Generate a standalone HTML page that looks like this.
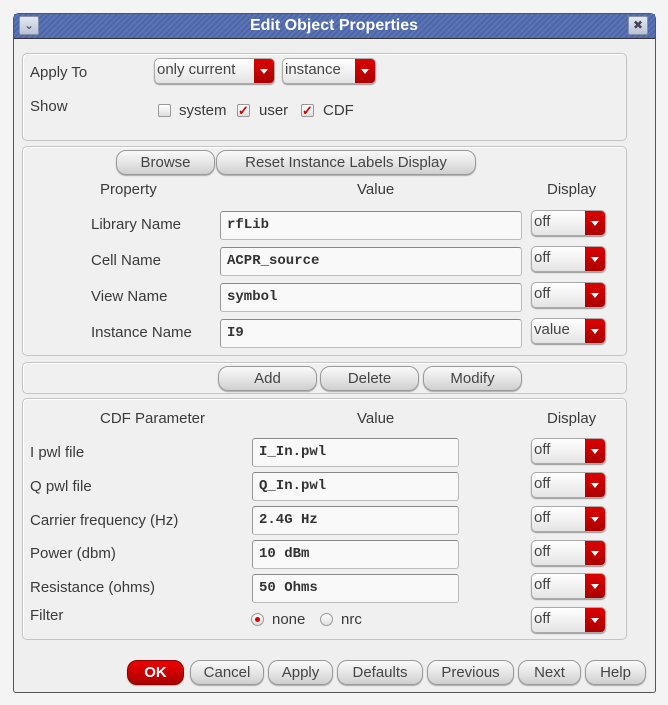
<!DOCTYPE html>
<html><head><meta charset="utf-8"><style>
*{box-sizing:border-box;margin:0;padding:0}
body{width:668px;height:705px;background:#f4f4f4;position:relative;overflow:hidden;font-family:"Liberation Sans",sans-serif;font-size:15px;color:#3a3a3a}
.a{position:absolute}
.win{left:13px;top:13px;width:643px;height:680px;border:1px solid #555;border-radius:6px 6px 3px 3px;background:#efefef}
.title{left:14px;top:14px;width:641px;height:25px;background:repeating-linear-gradient(135deg,#4d66a8 0 2px,#5a74b6 2px 4px);border-bottom:1px solid #333}
.tt{left:0;width:668px;top:17px;text-align:center;color:#fff;font-weight:bold;font-size:16px}
.tb{width:20px;height:19px;background:linear-gradient(#e4e8f0,#b9c2d6);border:1px solid #8890a8;border-radius:2px;text-align:center;font-size:12px;line-height:17px;color:#445}
.grp{border:1px solid #c4c4c4;border-radius:5px;background:#f0f0f0;box-shadow:inset 1px 1px 0 #fff}
.btn{height:25px;border:1px solid #999;border-radius:10px;background:linear-gradient(#fafafa,#e2e2e2 60%,#cfcfcf);text-align:center;line-height:23px;color:#444;box-shadow:0 1px 1px #aaa}
.dd{height:26px;border:1px solid #aaa;border-radius:5px;background:linear-gradient(#fff,#e4e4e4);color:#444;padding-left:2px;line-height:22px;box-shadow:0 1px 1px #999;overflow:hidden}
.dd i{position:absolute;right:0;top:0;width:20px;height:100%;background:linear-gradient(#d00,#a00)}
.dd i:after{content:"";position:absolute;left:6px;top:10px;border-left:4px solid transparent;border-right:4px solid transparent;border-top:5px solid #fff}
.fld{height:29px;border:1px solid #bbb;border-top-color:#888;border-left-color:#999;border-radius:3px;background:#f9f9f9;font-family:"Liberation Mono",monospace;font-weight:bold;font-size:14px;line-height:27px;padding-left:6px;color:#333}
.cb{width:13px;height:13px;border:1px solid #999;background:linear-gradient(#fff,#ddd);border-radius:2px;color:#c00;font-size:13px;line-height:11px;text-align:center;font-weight:bold}
.rd{width:13px;height:13px;border:1px solid #999;border-radius:50%;background:linear-gradient(#fff,#ddd)}
</style></head><body>
<div class="a win"></div>
<div class="a title"></div>
<div class="a tt">Edit Object Properties</div>
<div class="a tb" style="left:19px;top:16px">&#8964;</div>
<div class="a tb" style="left:628px;top:16px">&#10006;</div>

<div class="a grp" style="left:22px;top:53px;width:605px;height:88px"></div>
<div class="a" style="left:30px;top:64px">Apply To</div>
<div class="a" style="left:30px;top:98px">Show</div>
<div class="a dd" style="left:154px;top:58px;width:121px">only current<i></i></div>
<div class="a dd" style="left:282px;top:58px;width:94px">instance<i></i></div>
<div class="a cb" style="left:158px;top:104px"></div><div class="a" style="left:179px;top:102px">system</div>
<div class="a cb" style="left:237px;top:104px">&#10003;</div><div class="a" style="left:259px;top:102px">user</div>
<div class="a cb" style="left:301px;top:104px">&#10003;</div><div class="a" style="left:323px;top:102px">CDF</div>

<div class="a grp" style="left:22px;top:146px;width:605px;height:210px"></div>
<div class="a btn" style="left:116px;top:150px;width:99px">Browse</div>
<div class="a btn" style="left:216px;top:150px;width:260px">Reset Instance Labels Display</div>
<div class="a" style="left:100px;top:181px">Property</div>
<div class="a" style="left:357px;top:181px">Value</div>
<div class="a" style="left:547px;top:181px">Display</div>
<div class="a" style="left:91px;top:216px">Library Name</div>
<div class="a" style="left:91px;top:252px">Cell Name</div>
<div class="a" style="left:91px;top:288px">View Name</div>
<div class="a" style="left:91px;top:324px">Instance Name</div>
<div class="a fld" style="left:220px;top:211px;width:302px">rfLib</div>
<div class="a fld" style="left:220px;top:247px;width:302px">ACPR_source</div>
<div class="a fld" style="left:220px;top:283px;width:302px">symbol</div>
<div class="a fld" style="left:220px;top:319px;width:302px">I9</div>
<div class="a dd" style="left:531px;top:210px;width:75px">off<i></i></div>
<div class="a dd" style="left:531px;top:246px;width:75px">off<i></i></div>
<div class="a dd" style="left:531px;top:282px;width:75px">off<i></i></div>
<div class="a dd" style="left:531px;top:318px;width:75px">value<i></i></div>

<div class="a grp" style="left:22px;top:362px;width:605px;height:32px"></div>
<div class="a btn" style="left:218px;top:366px;width:99px">Add</div>
<div class="a btn" style="left:320px;top:366px;width:99px">Delete</div>
<div class="a btn" style="left:423px;top:366px;width:99px">Modify</div>

<div class="a grp" style="left:22px;top:398px;width:605px;height:242px"></div>
<div class="a" style="left:100px;top:410px">CDF Parameter</div>
<div class="a" style="left:357px;top:410px">Value</div>
<div class="a" style="left:547px;top:410px">Display</div>
<div class="a" style="left:30px;top:444px">I pwl file</div>
<div class="a" style="left:30px;top:478px">Q pwl file</div>
<div class="a" style="left:30px;top:512px">Carrier frequency (Hz)</div>
<div class="a" style="left:30px;top:545px">Power (dbm)</div>
<div class="a" style="left:30px;top:579px">Resistance (ohms)</div>
<div class="a" style="left:30px;top:607px">Filter</div>
<div class="a fld" style="left:252px;top:438px;width:207px">I_In.pwl</div>
<div class="a fld" style="left:252px;top:472px;width:207px">Q_In.pwl</div>
<div class="a fld" style="left:252px;top:506px;width:207px">2.4G Hz</div>
<div class="a fld" style="left:252px;top:540px;width:207px">10 dBm</div>
<div class="a fld" style="left:252px;top:574px;width:207px">50 Ohms</div>
<div class="a rd" style="left:251px;top:613px"><div class="a" style="left:3px;top:3px;width:5px;height:5px;border-radius:50%;background:#d00"></div></div>
<div class="a" style="left:272px;top:611px">none</div>
<div class="a rd" style="left:320px;top:613px"></div>
<div class="a" style="left:341px;top:611px">nrc</div>
<div class="a dd" style="left:531px;top:438px;width:75px">off<i></i></div>
<div class="a dd" style="left:531px;top:472px;width:75px">off<i></i></div>
<div class="a dd" style="left:531px;top:506px;width:75px">off<i></i></div>
<div class="a dd" style="left:531px;top:540px;width:75px">off<i></i></div>
<div class="a dd" style="left:531px;top:573px;width:75px">off<i></i></div>
<div class="a dd" style="left:531px;top:607px;width:75px">off<i></i></div>

<div class="a btn" style="left:127px;top:660px;width:57px;background:linear-gradient(#e00,#a00);color:#fff;font-weight:bold;border-color:#800">OK</div>
<div class="a btn" style="left:190px;top:660px;width:74px">Cancel</div>
<div class="a btn" style="left:268px;top:660px;width:65px">Apply</div>
<div class="a btn" style="left:337px;top:660px;width:86px">Defaults</div>
<div class="a btn" style="left:427px;top:660px;width:87px">Previous</div>
<div class="a btn" style="left:518px;top:660px;width:63px">Next</div>
<div class="a btn" style="left:585px;top:660px;width:61px">Help</div>
</body></html>
